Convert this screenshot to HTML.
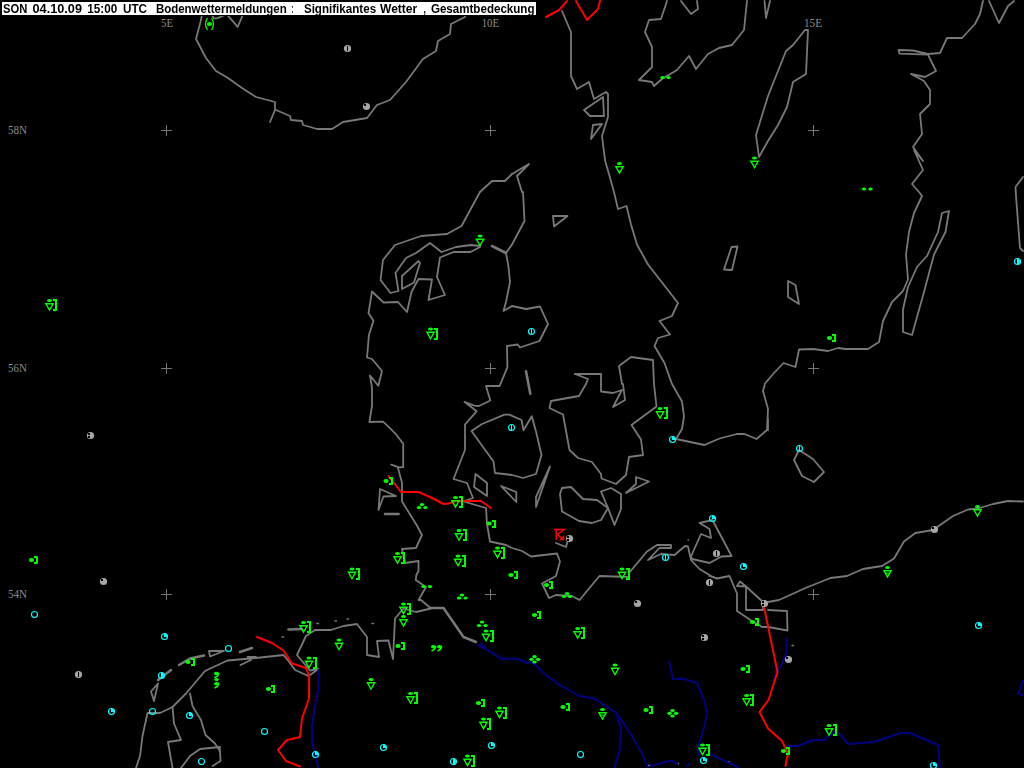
<!DOCTYPE html>
<html lang="de"><head><meta charset="utf-8"><title>Bodenwettermeldungen</title>
<style>html,body{margin:0;padding:0;background:#000;overflow:hidden}svg{display:block}.t{font-family:"Liberation Sans",Arial,sans-serif;font-weight:bold;font-size:12.5px;fill:#000}.l{font-family:"Liberation Serif","DejaVu Serif",serif;font-size:11.5px;fill:#8a8a8a}</style></head><body>
<svg width="1024" height="768" viewBox="0 0 1024 768">
<rect width="1024" height="768" fill="#000"/>
<g fill="none" stroke="#787878" stroke-linejoin="round" stroke-linecap="round">
<polyline points="202,15 200.5,22 196,39 206,58 216,71 228,78 242,88 256,97 275,102 275,110 270,122" stroke-width="1.8"/>
<polyline points="211.9,15 213.8,18.3 217,18.3 224.4,15.2" stroke-width="1.8"/>
<polyline points="227.5,15.2 237.7,26.8 242.7,15.2" stroke-width="1.8"/>
<polyline points="276,110 290,116 291,120 302,121 303,125 317,129 332,129 343,122 367,118 377,105 390,100 406,82 423,59 436,51 438,41 450,34 451,24 465,17 465,15" stroke-width="1.8"/>
<polyline points="562,11 571,32 571,76 577,89 589,82 594,99 606,92 608,94 608,117 602,136 605,160 614,192 618,209 626.5,206 631,224.5 637,244.5 648,264.5 678,303 672,316 659.5,321 670,334.5 658,338 654.5,346 664.5,363 672,384 682,401.5 684,416.5 682,429 676,439 704.5,445 719.5,438.5 737,434 744.5,434 756.5,439 767,430 768,409 763,391" stroke-width="1.8"/>
<polygon points="584,110 603,97 604,116 590,116" stroke-width="1.8"/>
<polygon points="593,125 602,124 591,139" stroke-width="1.8"/>
<polyline points="667,1 661,19 649,20 645,32 652,47 652,67 639,80 652,82 654,86 662,79 677,70 689,56 696,69 708,54 719,48 732,45 744,30 747,1" stroke-width="1.8"/>
<polyline points="681,1 691,14 698,9 697,1" stroke-width="1.8"/>
<polyline points="764.5,1 766,18 770,1" stroke-width="1.8"/>
<polygon points="808,30 805,30 793,45 786,51 768,96 756,135 759,157 768,141 778,125 787,107 793,82 806,74" stroke-width="1.8"/>
<polyline points="983,1 980,14 975,24 962,38 947,38 940,53 928,54 913,50.5 898.5,50 899.5,53.6 928,54.6 936,71 925,77 911,74 924,81 930,90 930,104 920,114 922,134 913,147 923,161 914,150 923,170 912,184 919,192 922,196 914,213 909,232 906,254.5 908,279.5 903,291 892,302 883,321 879,342 868,349 845.5,349 838,348 828,351 813,349 799,349.5 795.5,367 783.5,363 774,373 765,383.5 763,391" stroke-width="1.8"/>
<polyline points="989,1 999,23 1008,6 1014,1" stroke-width="1.8"/>
<polyline points="1023,177 1015.5,187 1016,196 1020,248 1023,251" stroke-width="1.8"/>
<polygon points="942,213 949,211 945.5,232 934,254.5 924,292 912,335 903,332 903,309.5 908,287 917,267 927,256 938,232" stroke-width="1.8"/>
<polygon points="788,281 795.5,285 799,304 788,297" stroke-width="1.8"/>
<polygon points="731.5,247 737.5,246.5 732,270 724,269.5" stroke-width="1.8"/>
<polyline points="512,174 529,164 517,176 522,192 523,192 524.5,221 512,244.5 506,253" stroke-width="1.8"/>
<polyline points="480,192 492,181 505,181 512,174" stroke-width="1.8"/>
<polyline points="480,192 461.5,226 447,234 421,236 395,245 383,260 380.5,280 390.5,293 398.5,291 395.5,273 406,258 416,253 430,243 441.5,252 456,247 471,245 480,246" stroke-width="1.8"/>
<polyline points="480,247 470.5,252 453.5,252 440,257.5 437,277 445,295 428.5,300 432,279.5 418.5,279 411.5,292 407,312 398,302 383.5,302.5 372,291.5 368.5,313 373.5,321 369,334.5 367,357.5 372,359 382,371 378.3,385.7 370,375.5 372,387.8 372,406 369.4,422 383,421.7 389.2,427.4 396,434.3 403.2,443.8 403.2,467 398.8,467.3 391.3,464.6" stroke-width="1.8"/>
<polygon points="402,276 418.5,261 420,263 414,282.5 402,289" stroke-width="1.8"/>
<polyline points="492,246 506,253" stroke-width="2.6"/>
<polygon points="553,216 567.5,216 554,226.5" stroke-width="1.8"/>
<polyline points="398,468 402,483 402,501.5 416,524 422,535 416,548 402,549 405,563 418.5,561 418.5,571 416.3,575 415.8,580 426,587 418.5,600 421,600 431,608.5 416,612 403.5,608.5 395,618.5 393,659 388.5,640.5 377,641 379,657 367,655 367,637 357,624 343.5,626 331,630 315,630 306,636 297,655 310,670.5 318.5,669 308.5,676 295,670 288.5,661 283.5,655 256,658 227.5,660.5 205,671 186,693.5 172.5,707 160,713 147.5,713 142.5,736 140,756 136,768" stroke-width="1.8"/>
<polygon points="380,489 396,496 383.5,496.5 378.5,510" stroke-width="1.8"/>
<polyline points="385,514 398.5,514" stroke-width="2.6"/>
<polyline points="506,253 508.5,267 510,282 506,302 503.5,311 512,306 526,309 540,306.5 548,324 539.5,341 520,347.5 517.5,344.5 507,346 507.4,367.3 499.6,386 486,386 490.3,400.5 479,406 474.2,405.7 464.4,401.8 476.6,411.3 465,424.5 465,450 453.5,479 467,483 473,498 463.5,501.5 486,508 487,524 490,541.5 506,545 512,548 522,551 531,556.5 557,553.5 560,561.5 556,576 542,583.5 549,598 556,595 572,596 579.5,600 599.5,576 629,577" stroke-width="1.8"/>
<polygon points="509.3,414.7 504.5,414.7 482,424 471.5,431 493.5,461.5 495,473 512,475 523,478 536,474 541.5,455 536,431.5 531.8,416.2 523.5,430.3 521.5,420" stroke-width="1.8"/>
<polygon points="475.5,474 487,483 487,496 474,487" stroke-width="1.8"/>
<polygon points="501,486 516.3,492 516.3,502" stroke-width="1.8"/>
<polyline points="526,371.2 530.3,393.7" stroke-width="2.6"/>
<polyline points="586,384 579,396 551,401 549.5,408 563,414.5 569.5,450 578,458 592,462 601,474 601.5,478.5 616,484 626,475 629,457 643,455 641,439.5 631.5,425 656.5,406.5 654,384 653,360 631,357 619,366 622,384" stroke-width="1.8"/>
<polyline points="601,384 601,391.5 613,393 622,390 613,407 625,400 623,384" stroke-width="1.8"/>
<polyline points="575,374 601,374 601,384" stroke-width="1.8"/>
<polyline points="575,374 588,379 586,384" stroke-width="1.8"/>
<polygon points="550,466.5 536,497 536,507" stroke-width="1.8"/>
<polygon points="562,488 571,487 583,499 597,500 608,508 601,520 592,523 579,521 562,511.5 560,494" stroke-width="1.8"/>
<polygon points="601,491.5 611,488 621,494 621,509 614.5,525 608,508" stroke-width="1.8"/>
<polygon points="636,477 649,481.5 626,493 636,484" stroke-width="1.8"/>
<polyline points="556,543 566,547 567.5,541.5" stroke-width="1.8"/>
<polygon points="712.5,520 699.5,523 709.5,529 711,538 701,534 691,556.5 692,559 709.5,563 721.5,556.5 731.5,556" stroke-width="1.8"/>
<polyline points="629,573 647,551.5 657,545 671,545 671,548 659.5,548 648,560 661,554 674.5,555 685,546 688,546.5 691,560 699.5,569 711,576 717,578.5 729.5,576 737,593.5 737,611 752,621 762,627 768,627 787.5,630.5 787,611 768,610" stroke-width="1.8"/>
<polyline points="709.5,576 717,578.5" stroke-width="1.8"/>
<polygon points="737,586 740,581.5 746,586.5" stroke-width="1.8"/>
<polygon points="746,586.5 746,610 763,610 763,602" stroke-width="1.8"/>
<polyline points="688,540 688.5,540" stroke-width="1.5"/>
<polygon points="799,450 813,459 824,472 814,482 802,476 794,460" stroke-width="1.8"/>
<polyline points="768,419 768,430" stroke-width="1.8"/>
<polyline points="768,602 779,600 805.5,588 830.5,578 847,576 863,569 882,566 894,558.5 904,541.5 915.5,533 933,530 953,516 968,509.5 978,508.5 993,504 1008,501 1023,501.5" stroke-width="1.8"/>
<polyline points="431,608 443.5,608 463.5,637 476,642" stroke-width="2.5"/>
<polyline points="288.5,629.5 302,629" stroke-width="2.6"/>
<polyline points="282,637 283.5,637" stroke-width="1.5"/>
<polyline points="317,623.5 318.5,623.5" stroke-width="1.5"/>
<polyline points="335,621 336.5,621" stroke-width="1.5"/>
<polyline points="347,619 348.5,619" stroke-width="1.5"/>
<polyline points="372,623.5 373.5,623.5" stroke-width="1.5"/>
<polyline points="792,645.5 793.5,645.5" stroke-width="1.5"/>
<polyline points="677,763.6 678.5,763.6" stroke-width="1.5"/>
<polyline points="727.5,761.7 729,761.7" stroke-width="1.5"/>
<polyline points="648.5,765.5 650,765.5" stroke-width="1.5"/>
<polyline points="158,680 171,670" stroke-width="2.6"/>
<polyline points="179,665 190,658.5 204,655.5" stroke-width="2.6"/>
<polygon points="209,651 224,651 210,656.5" stroke-width="1.8"/>
<polyline points="240,652 252,648" stroke-width="2.6"/>
<polyline points="240.5,665 251,660 247.5,657 256,657" stroke-width="1.8"/>
<polygon points="158,683.5 154,701 151,691.5" stroke-width="1.8"/>
<polyline points="190,693.5 192.5,706 201,720 205.5,735 215,743.5 220,751 220.5,761 212.5,766" stroke-width="1.8"/>
<polyline points="172.5,707 174,723.5 181,740 168,742 172.5,768" stroke-width="1.8"/>
<polyline points="181,768 190,756 200,749 220,747 219.5,751" stroke-width="1.8"/>
</g>
<g fill="none" stroke="#000080" stroke-linejoin="round" stroke-linecap="round">
<polyline points="479.5,645 501.6,658.8 518,658.8 526.6,663 530.5,662 534.4,663.8 544.5,674 560,685 579.5,696 594.5,698.5 617,713.5 632,736 642,753.5 648,768" stroke-width="2"/>
<polyline points="617,716 621,728.5 619.5,751 614.5,768" stroke-width="2"/>
<polyline points="669,661 673,679 682,678.5 697,683 704.5,701 707,713.5 704.5,726 699,743.5 698,755" stroke-width="2"/>
<polyline points="651,766 671,760.5 677,763.5" stroke-width="2"/>
<polyline points="687,766 689.5,763.5" stroke-width="2"/>
<polyline points="709.5,753.5 724.5,761 738,767" stroke-width="2"/>
<polyline points="318.5,670 318.5,688.5 315,706 312,726 312,742 316,756 318,768" stroke-width="2"/>
<polyline points="786.8,638.4 786.5,652 782.5,662.5 776,675 773.5,680" stroke-width="2"/>
<polyline points="785,657 778,672" stroke-width="1.2"/>
<polyline points="788,746 798,746 813,740 824,740 834,732 839,733 848,744 874,742 900.5,733 910.5,733 938,745 940,768" stroke-width="2"/>
<polyline points="1023,681 1018,693.5 1023,695" stroke-width="2"/>
</g>
<polygon points="478,645.5 481.3,643.2 485,646.5 482,648.3" fill="none" stroke="#000080" stroke-width="1.2"/>
<g fill="none" stroke="#ff0000" stroke-linejoin="round" stroke-linecap="round">
<polyline points="546,17 559,10 567,1" stroke-width="2"/>
<polyline points="576,1 587,20 598,9 600,1" stroke-width="2"/>
<polyline points="388.5,476 401,492 418.5,492 432,498 443.5,504 448.5,503.5 456,501 481,501 491,508" stroke-width="2"/>
<polyline points="257,637 272,643 283.5,650.5 292,663.5 306,668 309,676 309,698.5 302,718.5 300,737 287,740 278,750 286,761 300,766.5" stroke-width="2"/>
<polyline points="764,607 777.5,672 768.5,700 759.5,712 768,728.5 782,741 788,753.5 785.5,766" stroke-width="2"/>
</g>
<g stroke="#747474" stroke-width="1" shape-rendering="crispEdges"><path d="M161.0,130.5H172.0M166.5,125.0V136.0"/><path d="M485.0,130.5H496.0M490.5,125.0V136.0"/><path d="M808.0,130.5H819.0M813.5,125.0V136.0"/><path d="M161.0,368.5H172.0M166.5,363.0V374.0"/><path d="M485.0,368.5H496.0M490.5,363.0V374.0"/><path d="M808.0,368.5H819.0M813.5,363.0V374.0"/><path d="M161.0,594.5H172.0M166.5,589.0V600.0"/><path d="M485.0,594.5H496.0M490.5,589.0V600.0"/><path d="M808.0,594.5H819.0M813.5,589.0V600.0"/></g>
<text class="l" x="161" y="26.6" textLength="12" lengthAdjust="spacingAndGlyphs">5E</text>
<text class="l" x="481.7" y="26.6" textLength="17.5" lengthAdjust="spacingAndGlyphs">10E</text>
<text class="l" x="804" y="26.6" textLength="18" lengthAdjust="spacingAndGlyphs">15E</text>
<text class="l" x="8" y="133.6" textLength="19" lengthAdjust="spacingAndGlyphs">58N</text>
<text class="l" x="8" y="372.2" textLength="19" lengthAdjust="spacingAndGlyphs">56N</text>
<text class="l" x="8" y="598" textLength="19" lengthAdjust="spacingAndGlyphs">54N</text>
<defs><g id="tr"><ellipse cx="0" cy="-2.5" rx="2.5" ry="1.6" fill="#0f0"/><path d="M-4.8,0H4.8L0,8.5Z M-2.4,1.5H2.4L0,5.8Z" fill="#0f0" fill-rule="evenodd"/></g><path id="bk" d="M3.5,-3H6.5V7H3.5" fill="none" stroke="#0f0" stroke-width="2" shape-rendering="crispEdges"/><g id="rb"><ellipse cx="0" cy="0" rx="2.6" ry="2.1" fill="#0f0"/><path d="M2.5,-3H5.5V3H2.5" fill="none" stroke="#0f0" stroke-width="2" shape-rendering="crispEdges"/></g><ellipse id="d" cx="0" cy="0" rx="2.2" ry="1.6" fill="#0f0"/><g id="cm"><ellipse cx="0" cy="0" rx="2.6" ry="1.8" fill="#0f0"/><path d="M2,0.3L1,2.4L-1.3,3.8" fill="none" stroke="#0f0" stroke-width="1.6" stroke-linecap="square"/></g></defs>
<use href="#tr" x="49.5" y="303"/><use href="#bk" x="49.5" y="303"/>
<use href="#tr" x="619.5" y="166"/>
<use href="#tr" x="754.5" y="160.5"/>
<use href="#tr" x="480" y="238.5"/>
<use href="#tr" x="430.5" y="331.5"/><use href="#bk" x="430.5" y="331.5"/>
<use href="#tr" x="455.5" y="500"/><use href="#bk" x="455.5" y="500"/>
<use href="#tr" x="459" y="533"/><use href="#bk" x="459" y="533"/>
<use href="#tr" x="397.5" y="556"/><use href="#bk" x="397.5" y="556"/>
<use href="#tr" x="458" y="558.5"/><use href="#bk" x="458" y="558.5"/>
<use href="#tr" x="497.5" y="550.5"/><use href="#bk" x="497.5" y="550.5"/>
<use href="#tr" x="352" y="571.5"/><use href="#bk" x="352" y="571.5"/>
<use href="#tr" x="660" y="411"/><use href="#bk" x="660" y="411"/>
<use href="#tr" x="622" y="571.5"/><use href="#bk" x="622" y="571.5"/>
<use href="#tr" x="977.5" y="509"/>
<use href="#tr" x="887.5" y="570"/>
<use href="#tr" x="403.5" y="606.5"/><use href="#bk" x="403.5" y="606.5"/>
<use href="#tr" x="403.5" y="619"/>
<use href="#tr" x="303.5" y="625"/><use href="#bk" x="303.5" y="625"/>
<use href="#tr" x="339" y="642.5"/>
<use href="#tr" x="309" y="660.5"/><use href="#bk" x="309" y="660.5"/>
<use href="#tr" x="486" y="633.5"/><use href="#bk" x="486" y="633.5"/>
<use href="#tr" x="371" y="682"/>
<use href="#tr" x="410.5" y="696"/><use href="#bk" x="410.5" y="696"/>
<use href="#tr" x="499.5" y="710.5"/><use href="#bk" x="499.5" y="710.5"/>
<use href="#tr" x="483.5" y="721.5"/><use href="#bk" x="483.5" y="721.5"/>
<use href="#tr" x="467.5" y="758.5"/><use href="#bk" x="467.5" y="758.5"/>
<use href="#tr" x="577.7" y="631"/><use href="#bk" x="577.7" y="631"/>
<use href="#tr" x="615" y="667.5"/>
<use href="#tr" x="602.5" y="712"/>
<use href="#tr" x="746.5" y="698"/><use href="#bk" x="746.5" y="698"/>
<use href="#tr" x="702.5" y="747.5"/><use href="#bk" x="702.5" y="747.5"/>
<use href="#tr" x="829" y="728"/><use href="#bk" x="829" y="728"/>
<rect x="600" y="714.6" width="5" height="1.1" fill="#0f0"/><rect x="885" y="572.6" width="5" height="1.1" fill="#0f0"/>
<use href="#rb" x="829.5" y="338"/>
<use href="#rb" x="31.5" y="560"/>
<use href="#rb" x="386" y="481"/>
<use href="#rb" x="489" y="523.5"/>
<use href="#rb" x="188" y="662"/>
<use href="#rb" x="398" y="646"/>
<use href="#rb" x="268.5" y="689"/>
<use href="#rb" x="478.5" y="703"/>
<use href="#rb" x="546.5" y="585"/>
<use href="#rb" x="534.5" y="615"/>
<use href="#rb" x="563" y="707"/>
<use href="#rb" x="646" y="710"/>
<use href="#rb" x="743" y="669"/>
<use href="#rb" x="752.5" y="622"/>
<use href="#rb" x="783.5" y="751"/>
<use href="#rb" x="511" y="575"/>
<use href="#d" x="662.5" y="77.5"/>
<use href="#d" x="668.5" y="77.5"/>
<use href="#d" x="864" y="189"/>
<use href="#d" x="870.5" y="189"/>
<use href="#d" x="422" y="504.5"/>
<use href="#d" x="419" y="507.5"/>
<use href="#d" x="425.5" y="507.5"/>
<use href="#d" x="423.5" y="586.5"/>
<use href="#d" x="430" y="586.5"/>
<use href="#d" x="462" y="595"/>
<use href="#d" x="459" y="598"/>
<use href="#d" x="465.5" y="598"/>
<use href="#d" x="482" y="622"/>
<use href="#d" x="479" y="625.5"/>
<use href="#d" x="485.5" y="625.5"/>
<use href="#d" x="567" y="593.5"/>
<use href="#d" x="564" y="596.5"/>
<use href="#d" x="570" y="596.5"/>
<use href="#d" x="534.5" y="656.5"/>
<use href="#d" x="531.5" y="659.3"/>
<use href="#d" x="538" y="659.3"/>
<use href="#d" x="534.5" y="662"/>
<use href="#d" x="672.5" y="710.5"/>
<use href="#d" x="669.5" y="713.3"/>
<use href="#d" x="676" y="713.3"/>
<use href="#d" x="672.5" y="716"/>
<use href="#d" x="216.5" y="679.5"/>
<use href="#cm" x="216.5" y="673.5"/>
<use href="#cm" x="216.5" y="683.8"/>
<use href="#cm" x="433.5" y="646.8"/>
<use href="#cm" x="439.5" y="646.8"/>
<circle cx="347.5" cy="48.5" r="3.6" fill="#a6a6a6"/><path d="M347.5,46.0V51.0" stroke="#000" stroke-width="1"/>
<circle cx="366.5" cy="106.5" r="3.6" fill="#a6a6a6"/><rect x="364.0" y="104.0" width="2" height="2" fill="#000"/>
<circle cx="531.5" cy="331.5" r="3" fill="none" stroke="#00ffff" stroke-width="1.15"/><path d="M531.5,328.5V334.5" stroke="#00ffff" stroke-width="1"/>
<circle cx="1017.5" cy="261.5" r="3" fill="none" stroke="#00ffff" stroke-width="1.15"/><path d="M1017.0,258.5A3,3 0 0 1 1017.0,264.5Z" fill="#00ffff"/>
<circle cx="90.5" cy="435.5" r="3.6" fill="#a6a6a6"/><rect x="88.0" y="433.0" width="2" height="2" fill="#000"/><rect x="88.0" y="436.0" width="2" height="2" fill="#000"/>
<circle cx="511.5" cy="427.5" r="3" fill="none" stroke="#00ffff" stroke-width="1.15"/><path d="M511.5,424.5V430.5" stroke="#00ffff" stroke-width="1"/>
<circle cx="672.5" cy="439.5" r="3" fill="none" stroke="#00ffff" stroke-width="1.15"/><path d="M672.0,440.0V436.5A3,3 0 0 1 675.5,440.0Z" fill="#00ffff"/>
<circle cx="712.5" cy="518.5" r="3" fill="none" stroke="#00ffff" stroke-width="1.15"/><path d="M712.0,519.0V515.5A3,3 0 0 1 715.5,519.0Z" fill="#00ffff"/>
<circle cx="716.5" cy="553.5" r="3.6" fill="#a6a6a6"/><path d="M716.5,551.0V556.0" stroke="#000" stroke-width="1"/>
<circle cx="665.5" cy="557.5" r="3" fill="none" stroke="#00ffff" stroke-width="1.15"/><path d="M665.5,554.5V560.5" stroke="#00ffff" stroke-width="1"/>
<circle cx="743.5" cy="566.5" r="3" fill="none" stroke="#00ffff" stroke-width="1.15"/><path d="M743.0,567.0V563.5A3,3 0 0 1 746.5,567.0Z" fill="#00ffff"/>
<circle cx="569.5" cy="538.5" r="3.6" fill="#a6a6a6"/><rect x="567.0" y="536.0" width="2" height="2" fill="#000"/><rect x="567.0" y="539.0" width="2" height="2" fill="#000"/>
<circle cx="799.5" cy="448.5" r="3" fill="none" stroke="#00ffff" stroke-width="1.15"/><path d="M799.5,445.5V451.5" stroke="#00ffff" stroke-width="1"/>
<circle cx="934.5" cy="529.5" r="3.6" fill="#a6a6a6"/><rect x="932.0" y="527.0" width="2" height="2" fill="#000"/>
<circle cx="103.5" cy="581.5" r="3.6" fill="#a6a6a6"/><rect x="101.0" y="579.0" width="2" height="2" fill="#000"/>
<circle cx="34.5" cy="614.5" r="3" fill="none" stroke="#00ffff" stroke-width="1.15"/>
<circle cx="164.5" cy="636.5" r="3" fill="none" stroke="#00ffff" stroke-width="1.15"/><path d="M164.0,637.0V633.5A3,3 0 0 1 167.5,637.0Z" fill="#00ffff"/>
<circle cx="78.5" cy="674.5" r="3.6" fill="#a6a6a6"/><path d="M78.5,672.0V677.0" stroke="#000" stroke-width="1"/>
<circle cx="161.5" cy="675.5" r="3" fill="none" stroke="#00ffff" stroke-width="1.15"/><path d="M161.0,672.5A3,3 0 0 1 161.0,678.5Z" fill="#00ffff"/>
<circle cx="228.5" cy="648.5" r="3" fill="none" stroke="#00ffff" stroke-width="1.15"/>
<circle cx="111.5" cy="711.5" r="3" fill="none" stroke="#00ffff" stroke-width="1.15"/><path d="M111.0,712.0V708.5A3,3 0 0 1 114.5,712.0Z" fill="#00ffff"/>
<circle cx="152.5" cy="711.5" r="3" fill="none" stroke="#00ffff" stroke-width="1.15"/>
<circle cx="189.5" cy="715.5" r="3" fill="none" stroke="#00ffff" stroke-width="1.15"/><path d="M189.0,716.0V712.5A3,3 0 0 1 192.5,716.0Z" fill="#00ffff"/>
<circle cx="201.5" cy="761.5" r="3" fill="none" stroke="#00ffff" stroke-width="1.15"/>
<circle cx="264.5" cy="731.5" r="3" fill="none" stroke="#00ffff" stroke-width="1.15"/>
<circle cx="383.5" cy="747.5" r="3" fill="none" stroke="#00ffff" stroke-width="1.15"/><path d="M383.0,748.0V744.5A3,3 0 0 1 386.5,748.0Z" fill="#00ffff"/>
<circle cx="315.5" cy="754.5" r="3" fill="none" stroke="#00ffff" stroke-width="1.15"/><path d="M315.0,755.0V751.5A3,3 0 0 1 318.5,755.0Z" fill="#00ffff"/>
<circle cx="453.5" cy="761.5" r="3" fill="none" stroke="#00ffff" stroke-width="1.15"/><path d="M453.0,758.5A3,3 0 0 1 453.0,764.5Z" fill="#00ffff"/>
<circle cx="491.5" cy="745.5" r="3" fill="none" stroke="#00ffff" stroke-width="1.15"/><path d="M491.0,746.0V742.5A3,3 0 0 1 494.5,746.0Z" fill="#00ffff"/>
<circle cx="709.5" cy="582.5" r="3.6" fill="#a6a6a6"/><path d="M709.5,580.0V585.0" stroke="#000" stroke-width="1"/>
<circle cx="637.5" cy="603.5" r="3.6" fill="#a6a6a6"/><rect x="635.0" y="601.0" width="2" height="2" fill="#000"/>
<circle cx="704.5" cy="637.5" r="3.6" fill="#a6a6a6"/><rect x="702.0" y="635.0" width="2" height="2" fill="#000"/><rect x="702.0" y="638.0" width="2" height="2" fill="#000"/>
<circle cx="764.5" cy="603.5" r="3.6" fill="#a6a6a6"/><rect x="762.0" y="601.0" width="2" height="2" fill="#000"/><rect x="762.0" y="604.0" width="2" height="2" fill="#000"/>
<circle cx="580.5" cy="754.5" r="3" fill="none" stroke="#00ffff" stroke-width="1.15"/>
<circle cx="703.5" cy="760.5" r="3" fill="none" stroke="#00ffff" stroke-width="1.15"/><path d="M703.0,761.0V757.5A3,3 0 0 1 706.5,761.0Z" fill="#00ffff"/>
<circle cx="788.5" cy="659.5" r="3.6" fill="#a6a6a6"/><rect x="786.0" y="657.0" width="2" height="2" fill="#000"/>
<circle cx="978.5" cy="625.5" r="3" fill="none" stroke="#00ffff" stroke-width="1.15"/><path d="M978.0,626.0V622.5A3,3 0 0 1 981.5,626.0Z" fill="#00ffff"/>
<circle cx="933.5" cy="765.5" r="3" fill="none" stroke="#00ffff" stroke-width="1.15"/><path d="M933.0,766.0V762.5A3,3 0 0 1 936.5,766.0Z" fill="#00ffff"/>
<ellipse cx="209.5" cy="24" rx="2.6" ry="2.1" fill="#00ff00"/><path d="M207.5,18 q-4,6 0,12 M211.5,18 q4,6 0,12" fill="none" stroke="#00ff00" stroke-width="1.3"/>
<path d="M554,529.5H564L557.5,534.5L563,539.5M556.2,529.5V540" fill="none" stroke="#f00" stroke-width="1.5" stroke-linejoin="miter"/><path d="M564.3,535V540.2H559Z" fill="#f00"/>
<rect x="1.5" y="1.5" width="535" height="14" fill="#fff" stroke="#000" stroke-width="1"/>
<g style="filter:grayscale(1)">
<text class="t" x="3" y="13" textLength="24.3" lengthAdjust="spacingAndGlyphs">SON</text>
<text class="t" x="32.5" y="13" textLength="49.5" lengthAdjust="spacingAndGlyphs">04.10.09</text>
<text class="t" x="87.2" y="13" textLength="30" lengthAdjust="spacingAndGlyphs">15:00</text>
<text class="t" x="123" y="13" textLength="24" lengthAdjust="spacingAndGlyphs">UTC</text>
<text class="t" x="155.9" y="13" textLength="130.8" lengthAdjust="spacingAndGlyphs">Bodenwettermeldungen</text>
<text class="t" x="291.4" y="13" textLength="2" lengthAdjust="spacingAndGlyphs">:</text>
<text class="t" x="303.9" y="13" textLength="72.2" lengthAdjust="spacingAndGlyphs">Signifikantes</text>
<text class="t" x="380" y="13" textLength="37.2" lengthAdjust="spacingAndGlyphs">Wetter</text>
<text class="t" x="423.4" y="13" textLength="2.4" lengthAdjust="spacingAndGlyphs">,</text>
<text class="t" x="430.9" y="13" textLength="103.6" lengthAdjust="spacingAndGlyphs">Gesamtbedeckung</text>
</g>
</svg></body></html>
